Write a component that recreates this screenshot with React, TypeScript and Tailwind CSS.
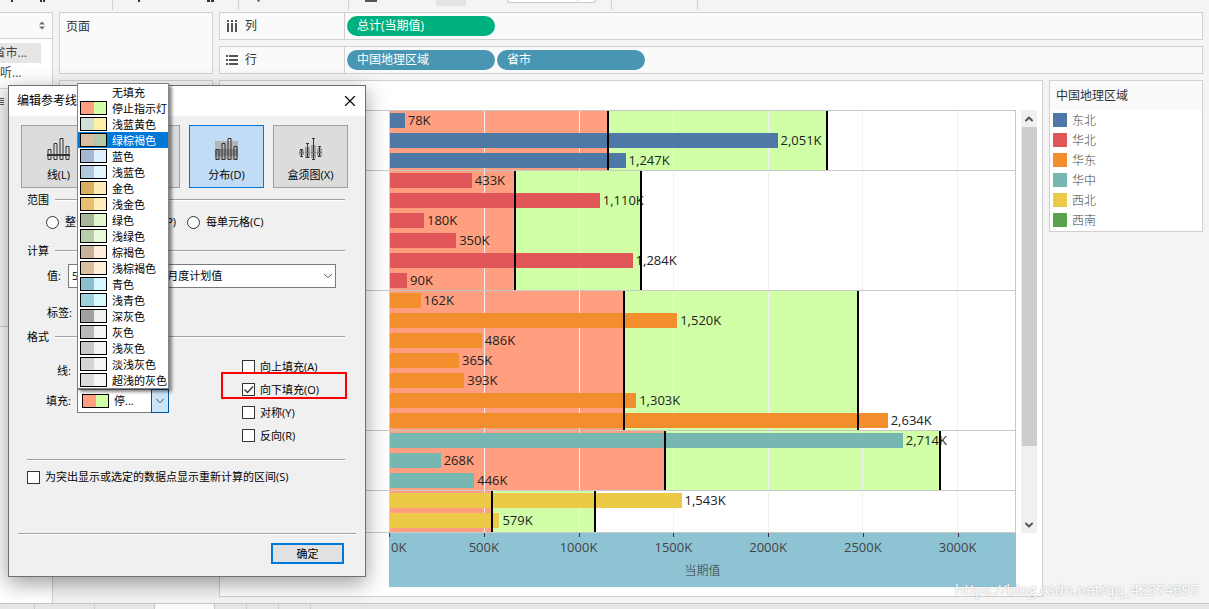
import type { ReactNode } from "react";
import { ChevronDown, ChevronUp, X } from "lucide-react";

const AXIS_MAX = 3308;
const ticks = [0, 500, 1000, 1500, 2000, 2500, 3000];

const groups = [
    { name: "东北", color: "bg-[#4e79a7]", refs: [1155, 2312], values: [78, 2051, 1247] },
    { name: "华北", color: "bg-[#e15759]", refs: [664, 1329], values: [433, 1110, 180, 350, 1284, 90] },
    { name: "华东", color: "bg-[#f28e2b]", refs: [1239, 2476], values: [162, 1520, 486, 365, 393, 1303, 2634] },
    { name: "华中", color: "bg-[#76b7b2]", refs: [1456, 2910], values: [2714, 268, 446] },
    { name: "西北", color: "bg-[#edc948]", refs: [541, 1086], values: [1543, 579] },
];

const legend = [
    ...groups.map(({ name, color }) => ({ name, color })),
    { name: "西南", color: "bg-[#59a14f]" },
];

const fills = [
    { name: "无填充" },
    { name: "停止指示灯", from: "bg-[#ff9f80]", to: "bg-[#d0ffa8]" },
    { name: "浅蓝黄色", from: "bg-[#d0e0d8]", to: "bg-[#fff0a8]" },
    { name: "绿棕褐色", from: "bg-[#d8bfa3]", to: "bg-[#b5c9a8]", active: true },
    { name: "蓝色", from: "bg-[#a5b8d0]", to: "bg-[#e0f0ff]" },
    { name: "浅蓝色", from: "bg-[#b0c8dc]", to: "bg-[#e4f4ff]" },
    { name: "金色", from: "bg-[#d8b060]", to: "bg-[#ffebb8]" },
    { name: "浅金色", from: "bg-[#e8be70]", to: "bg-[#ffeebb]" },
    { name: "绿色", from: "bg-[#a6b898]", to: "bg-[#e4f8d0]" },
    { name: "浅绿色", from: "bg-[#b8ceaa]", to: "bg-[#e8fad8]" },
    { name: "棕褐色", from: "bg-[#c8b298]", to: "bg-[#ffeedc]" },
    { name: "浅棕褐色", from: "bg-[#d8c0a0]", to: "bg-[#fff0d8]" },
    { name: "青色", from: "bg-[#8cbfcc]", to: "bg-[#d4f8ff]" },
    { name: "浅青色", from: "bg-[#9cd0dc]", to: "bg-[#d8faff]" },
    { name: "深灰色", from: "bg-[#a0a0a0]", to: "bg-[#f0f0f0]" },
    { name: "灰色", from: "bg-[#b8b8b8]", to: "bg-[#f4f4f4]" },
    { name: "浅灰色", from: "bg-[#c8c8c8]", to: "bg-[#f4f4f4]" },
    { name: "淡浅灰色", from: "bg-[#d4d4d4]", to: "bg-[#f4f4f4]" },
    { name: "超浅的灰色", from: "bg-[#dcdcdc]", to: "bg-[#f6f6f6]" },
];

const pct = (value: number) => `${(value / AXIS_MAX) * 100}%`;

/* TOOLBAR */
const Toolbar = () => (
    <div className="flex h-3 shrink-0 items-start">
        <div className="h-2.5 w-[113px] border-r border-[#d0d0d0]">
            <svg width="60" height="3" fill="#333"><path d="M11 0h2v2h-2zM40 0h2v2h-2zM43 0h2v2h-2z" /></svg>
        </div>
        <div className="h-2.5 w-[126px] border-r border-[#d0d0d0]">
            <svg width="110" height="3" fill="#333"><path d="M25 0h2v2h-2zM94 0h3v2h-3zM98 0h3v2h-3z" /></svg>
        </div>
        <div className="h-2.5 w-[110px] border-r border-[#d0d0d0]">
            <svg width="40" height="3" fill="#666"><path d="M18 0h3v1h-1v1h-1z" /></svg>
        </div>
        <div className="flex h-2.5 w-[263px] items-start border-r border-[#d0d0d0] pl-4">
            <span className="h-0.5 w-3 bg-[#555]" />
            <span className="ml-[59px] h-1.5 w-[30px] bg-[#e4e4e4]" />
            <span className="ml-[41px] flex h-[3px] w-[89px] justify-end rounded-b-sm border border-t-0 border-[#c8c8c8] bg-white">
                <span className="w-[18px] border-l border-[#d8d8d8]" />
            </span>
        </div>
        <div className="h-2.5 w-[86px] border-r border-[#d0d0d0]" />
    </div>
);

/* LEFT DATA PANE */
const DataPane = () => (
    <aside className="flex w-[53px] shrink-0 flex-col overflow-hidden border-t border-r border-[#d0d0d0] bg-white text-xs text-[#444]">
        <div className="flex h-[26px] items-center justify-end border-b border-[#d0d0d0] bg-[#fafafa] pr-1.5">
            <svg width="8" height="9" fill="#666d7a"><path d="M4 0.500l3 3H1zM4 8.500l3-3H1z" /></svg>
        </div>
        <div className="flex h-[50px] flex-col items-start border-b border-[#d0d0d0] pt-1">
            <div className="flex h-5 w-[41px] items-center justify-end bg-[#e6e6e6] pr-3.5 whitespace-nowrap">省市...</div>
            <div className="flex h-5 items-center whitespace-nowrap">听...</div>
        </div>
        <div className="h-[238px] border-b border-[#d0d0d0] bg-[#fafafa] pt-2">
            <svg width="5" height="9" stroke="#555"><path d="M0 1.500h4M0 3.500h4M0 5.500h4M0 7.500h4" /></svg>
        </div>
    </aside>
);

const Pill = ({ color, children }: { color: string; children: ReactNode }) => (
    <button className={`h-5 w-[148px] rounded-full px-2.5 text-left text-xs leading-5 text-white ${color}`}>
        {children}
    </button>
);

const Shelf = ({ icon, label, children }: { icon: ReactNode; label: string; children: ReactNode }) => (
    <div className="flex h-7 border border-[#d0d0d0] bg-[#fafafa]">
        <div className="flex w-[125px] items-center gap-[7px] border-r border-[#d0d0d0] pl-1.5 text-xs text-[#333]">
            {icon}
            <span>{label}</span>
        </div>
        <div className="flex items-center gap-0.5 pl-0.5">{children}</div>
    </div>
);

/* CHART */
const Chart = () => (
    <div className="min-w-0 flex-1 text-[13px] text-[#222]">
        <div className="border-r border-[#c8c8c8]">
            {groups.map((group) => (
                <div key={group.name} className="flex border-t border-[#c8c8c8]">
                    <div className="w-[169px] shrink-0" />
                    <div className="relative min-w-0 flex-1 border-l border-[#d0d0d0]">
                        <div className="absolute inset-y-0 left-0 bg-[#ff9f80]" style={{ width: pct(group.refs[0]) }} />
                        <div
                            className="absolute inset-y-0 bg-[#d0ffa8]"
                            style={{ left: pct(group.refs[0]), width: pct(group.refs[1] - group.refs[0]) }}
                        />
                        {ticks.slice(1).map((t) => (
                            <div key={t} className="absolute inset-y-0 w-px bg-[#f2f2f2]" style={{ left: pct(t) }} />
                        ))}
                        <div className={`relative flex flex-col gap-[5px] pt-0.5 ${group.name === "西北" ? "pb-1" : "pb-0.5"}`}>
                            {group.values.map((v) => (
                                <div key={v} className="flex h-[15px] items-center gap-[3px]">
                                    <div className={`h-full shrink-0 ${group.color}`} style={{ width: pct(v) }} />
                                    <span className="leading-[15px]">{v.toLocaleString("en-US")}K</span>
                                </div>
                            ))}
                        </div>
                        {group.refs.map((r) => (
                            <div key={r} className="absolute inset-y-0 -ml-px w-0.5 bg-black" style={{ left: pct(r) }} />
                        ))}
                    </div>
                </div>
            ))}
        </div>
        {/* AXIS */}
        <div className="border-t border-[#c8c8c8] pl-[169px]">
            <div className="relative h-[54px] bg-[#8dc3d3] text-[#444]">
                {ticks.map((t) => (
                    <div key={t} className="absolute top-0 h-1 w-px bg-[#333]" style={{ left: pct(t) }} />
                ))}
                {ticks.map((t) => (
                    <span
                        key={t}
                        className={`absolute top-1.5 leading-4 ${t === 0 ? "pl-0.5" : "-translate-x-1/2"}`}
                        style={{ left: pct(t) }}
                    >
                        {t}K
                    </span>
                ))}
                <div className="pt-[30px] text-center text-xs leading-4 font-light text-[#333]">当期值</div>
            </div>
        </div>
    </div>
);

const Scrollbar = () => (
    <div className="flex h-[423px] w-4 flex-col items-center bg-[#f0f0f0] text-[#555]">
        <button aria-label="向上滚动" className="flex h-[17px] shrink-0 items-center"><ChevronUp size={12} strokeWidth={4} /></button>
        <div className="h-[319px] w-[15px] bg-[#cdcdcd]" />
        <button aria-label="向下滚动" className="mt-auto flex h-[17px] shrink-0 items-center"><ChevronDown size={12} strokeWidth={4} /></button>
    </div>
);

const Legend = () => (
    <section className="w-[154px] shrink-0 self-start border border-[#d0d0d0] bg-white text-xs">
        <h2 className="h-[29px] bg-[#fafafa] pl-1.5 leading-[29px] text-[#333]">中国地理区域</h2>
        <ul className="pb-px">
            {legend.map((item) => (
                <li key={item.name} className="flex h-5 items-center gap-[5px] pl-[3px] font-light text-[#444]">
                    <span className={`size-3.5 ${item.color}`} />
                    <span className="pt-0.5">{item.name}</span>
                </li>
            ))}
        </ul>
    </section>
);

/* DIALOG */
const Bars = () => (
    <path d="M1 11.500h3v10h-3zM7 5.500h3v16h-3zM13 0.500h3v21h-3zM19 8.500h3v13h-3z" fill="none" stroke="#333" />
);

const tabs = [
    {
        name: "线",
        label: "线(L)",
        icon: <><Bars /><path d="M0 17h23" stroke="#333" strokeWidth="2" /></>,
    },
    {
        name: "区间",
        icon: <><path d="M0 8h23v8H0z" fill="#aaa" /><Bars /></>,
    },
    {
        name: "分布",
        label: "分布(D)",
        active: true,
        icon: <><path d="M0 3h23v8H0z" fill="#b4b4b4" /><path d="M0 11h23v7H0z" fill="#8c8c8c" /><path d="M0 18h23v4H0z" fill="#b4b4b4" /><Bars /></>,
    },
    {
        name: "盒须图",
        label: "盒须图(X)",
        icon: (
            <>
                <path d="M0 12h5v5H0zM6 9h5v11H6zM12 7h5v13h-5zM18 10h5v8h-5z" fill="#a0a0a0" />
                <path d="M2.500 11.500v7M1 11.500h3M1 18.500h3M8.500 5.500v14M7 5.500h3M7 19.500h3M14.500 0.500v21M13 0.500h3M13 21.500h3M20.500 8.500v10M19 8.500h3M19 18.500h3" stroke="#333" fill="none" />
                <path d="M0 14.500h5M6 14.500h5M12 14.500h5M18 14.500h5" stroke="#777" />
            </>
        ),
    },
];

const SectionTitle = ({ children }: { children: ReactNode }) => (
    <div className="flex h-4 items-center gap-1.5">
        <h3>{children}</h3>
        <span className="h-0.5 flex-1 border-t border-[#a0a0a0] bg-white" />
    </div>
);

const Radio = ({ label }: { label: string }) => (
    <label className="flex items-center gap-1.5 whitespace-nowrap">
        <input type="radio" name="scope" className="size-[13px] appearance-none rounded-full border border-[#333] bg-white" />
        {label}
    </label>
);

const Check = ({ label, checked = false }: { label: string; checked?: boolean }) => (
    <label className="flex items-center gap-[5px] whitespace-nowrap">
        <span className="relative flex size-[13px] shrink-0">
            <input type="checkbox" defaultChecked={checked} className="size-[13px] appearance-none border border-[#333] bg-white" />
            {checked && (
                <svg className="pointer-events-none absolute inset-0" width="13" height="13" fill="none" stroke="#333" strokeWidth="1.300">
                    <path d="M2.500 6.500l3 3 5.500-6" />
                </svg>
            )}
        </span>
        {label}
    </label>
);

const Swatch = ({ from, to }: { from: string; to: string }) => (
    <span className="flex h-3.5 w-[27px] shrink-0 border border-black">
        <span className={`w-1/2 ${from}`} />
        <span className={`w-1/2 ${to}`} />
    </span>
);

const FillList = () => (
    <ul
        role="listbox"
        aria-label="填充"
        className="absolute bottom-full left-0 z-10 w-[92px] border border-[#808488] bg-white shadow-[3px_3px_3px_rgba(0,0,0,0.45)]"
    >
        {fills.map((f) => (
            <li
                key={f.name}
                role="option"
                aria-selected={!!f.active}
                className={`flex h-4 items-center gap-[5px] pl-0.5 whitespace-nowrap ${f.active ? "bg-[#0078d7] text-white" : ""}`}
            >
                {f.from ? <Swatch from={f.from} to={f.to} /> : <span className="w-[27px]" />}
                <span className="pt-0.5">{f.name}</span>
            </li>
        ))}
    </ul>
);

const Dialog = () => (
    <div
        role="dialog"
        aria-labelledby="dialog-title"
        className="absolute top-[85px] left-2 w-[358px] border border-[#707070] bg-[#f0f0f0] text-[11px] leading-4 text-black shadow-[0_6px_20px_rgba(0,0,0,0.4)]"
    >
        <div className="flex h-[30px] items-center justify-between bg-white pr-1.5 pl-2 text-xs">
            <h2 id="dialog-title">编辑参考线</h2>
            <button aria-label="关闭"><X size={18} strokeWidth={1.5} /></button>
        </div>
        <div className="px-3 pt-[9px]">
            <div className="flex gap-[9px]">
                {tabs.map((tab) => (
                    <button
                        key={tab.name}
                        aria-label={tab.name}
                        className={`flex h-[63px] w-[75px] flex-col items-center gap-[7px] border pt-3 ${tab.active ? "border-[#0078d7] bg-[#c0ddf5]" : "border-[#a0a0a0] bg-[#dcdcdc]"}`}
                    >
                        <svg width="23" height="22" className="shrink-0">{tab.icon}</svg>
                        {tab.label}
                    </button>
                ))}
            </div>
            <div className="mt-1 mr-2 ml-1.5">
                <SectionTitle>范围</SectionTitle>
                <div className="mt-1 grid h-5 grid-cols-[76px_65px_1fr] items-center pl-[19px]">
                    <Radio label="整个表(E)" />
                    <Radio label="每区(P)" />
                    <Radio label="每单元格(C)" />
                </div>

                <div className="mt-[11px]"><SectionTitle>计算</SectionTitle></div>
                <div className="mt-[5px] mr-[9px] flex h-6 items-center pl-5">
                    <label htmlFor="value" className="w-[21px]">值:</label>
                    <div className="relative flex h-6 flex-1">
                        <select id="value" className="h-6 w-full appearance-none border border-[#7a7a7a] bg-white pl-[3px]">
                            <option>50%,100%/平均值: 月度计划值</option>
                        </select>
                        <ChevronDown size={14} strokeWidth={1.5} className="pointer-events-none absolute top-[5px] right-px text-[#333]" />
                    </div>
                </div>
                <div className="mt-[13px] flex h-6 items-center pl-5">标签:</div>

                <div className="mt-1"><SectionTitle>格式</SectionTitle></div>
                <div className="grid grid-cols-[215px_1fr]">
                    <div className="pt-3.5">
                        <div className="flex h-6 w-11 items-center justify-end">线:</div>
                        <div className="mt-1.5 flex h-6 items-center gap-1.5 pl-[19px]">
                            <span id="fill-label" className="w-[25px]">填充:</span>
                            <div className="relative">
                                <FillList />
                                <button
                                    aria-labelledby="fill-label"
                                    aria-haspopup="listbox"
                                    className="flex h-6 w-[92px] items-center gap-[5px] border border-[#7a7a7a] bg-white pl-1"
                                >
                                    <Swatch from="bg-[#ff9f80]" to="bg-[#d0ffa8]" />
                                    停...
                                    <span className="-mr-px ml-auto flex h-6 w-[18px] items-center justify-center border border-[#005499] bg-[#cce4f7]">
                                        <ChevronDown size={14} strokeWidth={1.5} className="shrink-0 text-[#333]" />
                                    </span>
                                </button>
                            </div>
                        </div>
                    </div>
                    <div className="grid auto-rows-[23px] items-center pt-2.5">
                        <Check label="向上填充(A)" />
                        <div className="relative">
                            <Check label="向下填充(O)" checked />
                            <span className="pointer-events-none absolute -top-2.5 -left-[21px] h-[27px] w-[126px] border-2 border-[#f00]" />
                        </div>
                        <Check label="对称(Y)" />
                        <Check label="反向(R)" />
                    </div>
                </div>

                <div className="mt-3 h-0.5 border-t border-[#a0a0a0] bg-white" />
                <div className="mt-2"><Check label="为突出显示或选定的数据点显示重新计算的区间(S)" /></div>
            </div>
        </div>
        <div className="mx-[9px] mt-12 h-0.5 border-t border-[#a0a0a0] bg-white" />
        <div className="flex justify-end pt-2 pr-[21px] pb-3">
            <button className="flex h-[21px] w-[73px] items-center justify-center border-2 border-[#0078d7] bg-[#e1e1e1]">确定</button>
        </div>
    </div>
);

const SheetTabs = () => (
    <div className="flex h-1.5 shrink-0 border-t border-[#c8c8c8] bg-[#e6e6e6]">
        <div className="w-[35px] border-r border-[#c8c8c8]" />
        <div className="w-[60px] border-r border-[#c8c8c8]" />
        <div className="w-[60px] border-r border-[#c8c8c8]" />
        <div className="w-[60px] border-r border-[#c8c8c8] bg-[#fafafa]" />
        <div className="w-8 border-r border-[#c8c8c8]" />
        <div className="w-8 border-r border-[#c8c8c8]" />
        <div className="w-8 border-r border-[#c8c8c8]" />
    </div>
);

export default function App() {
    return (
        <div className="relative flex min-h-screen flex-col overflow-hidden bg-[#f4f4f4] font-['Open_Sans','Noto_Sans_CJK_SC',sans-serif]">
            <Toolbar />
            <div className="flex flex-1">
                <DataPane />
                <div className="ml-1.5 flex w-[154px] shrink-0 flex-col gap-1.5">
                    <div className="h-[62px] border border-[#d0d0d0] bg-[#fafafa] px-1.5 pt-1.5 text-xs leading-4 text-[#333]">页面</div>
                    <div className="h-40 border border-[#d0d0d0] bg-[#fafafa]" />
                </div>
                <main className="ml-1.5 flex min-w-0 flex-1 flex-col gap-1.5 pr-1.5 pb-1.5">
                    <Shelf
                        label="列"
                        icon={<svg width="12" height="12" fill="#555"><path d="M1 0h2v2H1zM5 0h2v2H5zM9 0h2v2H9zM1 3h2v9H1zM5 3h2v9H5zM9 3h2v9H9z" /></svg>}
                    >
                        <Pill color="bg-[#00b180]">总计(当期值)</Pill>
                    </Shelf>
                    <Shelf
                        label="行"
                        icon={<svg width="12" height="12" fill="#555"><path d="M0 1h2v2H0zM0 5h2v2H0zM0 9h2v2H0zM3 1h9v2H3zM3 5h9v2H3zM3 9h9v2H3z" /></svg>}
                    >
                        <Pill color="bg-[#4996b2]">中国地理区域</Pill>
                        <Pill color="bg-[#4996b2]">省市</Pill>
                    </Shelf>
                    <div className="flex flex-1 gap-1.5">
                        <div className="flex min-w-0 flex-1 gap-[5px] border border-[#d0d0d0] bg-white pt-[29px] pr-[5px]">
                            <Chart />
                            <Scrollbar />
                        </div>
                        <Legend />
                    </div>
                </main>
            </div>
            <SheetTabs />
            <Dialog />
            <span className="absolute right-2.5 bottom-2.5 text-[15px] leading-5 text-white [text-shadow:0_0_2px_#999]">
                https://blog.csdn.net/qq_42374697
            </span>
        </div>
    );
}
